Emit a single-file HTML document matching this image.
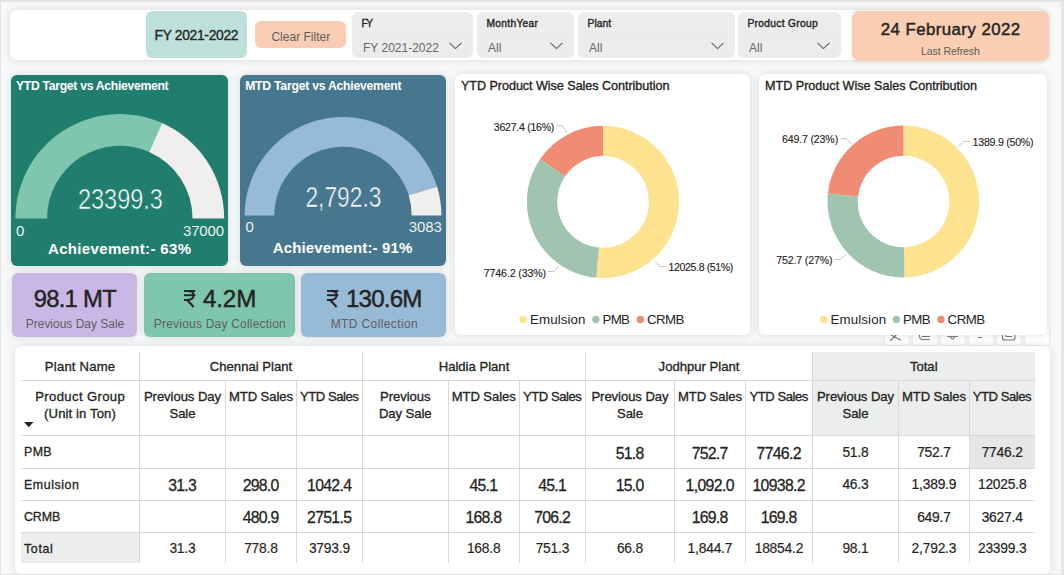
<!DOCTYPE html>
<html><head><meta charset="utf-8"><style>
html,body{margin:0;padding:0;}
body{width:1064px;height:575px;position:relative;overflow:hidden;background:#f7f8fa;font-family:"Liberation Sans", sans-serif;}
body > div, body > svg{position:absolute;}
.t{white-space:nowrap;}
</style></head><body>
<div style="left:10px;top:10px;width:1036px;height:50px;background:#ffffff;border-radius:6px;box-shadow:0 0 8px rgba(0,0,0,0.12);"></div>
<div style="left:146px;top:11px;width:101px;height:47px;background:#bde0da;border-radius:6px;"></div>
<div class="t" style="left:154.50px;top:28.62px;font-size:13.8px;line-height:13.8px;color:#252423;letter-spacing:-0.292px;-webkit-text-stroke:0.35px #252423;">FY 2021-2022</div>
<div style="left:255px;top:21px;width:91px;height:27px;background:#f9cdb3;border-radius:6px;"></div>
<div class="t" style="left:271.46px;top:30.84px;font-size:12px;line-height:12px;color:#605e5c;letter-spacing:0.000px;">Clear Filter</div>
<div style="left:352px;top:12px;width:121px;height:46px;background:#ececec;border-radius:6px;"></div>
<div style="left:360px;top:35px;width:105px;height:22px;border:1px solid #e8e8e8;box-sizing:border-box"></div>
<div class="t" style="left:361.50px;top:19.47px;font-size:10.2px;line-height:10.2px;color:#252423;letter-spacing:-1.434px;-webkit-text-stroke:0.38px #252423;">FY</div>
<div class="t" style="left:363.00px;top:41.84px;font-size:12px;line-height:12px;color:#666666;letter-spacing:0.000px;">FY 2021-2022</div>
<svg style="left:449.4px;top:41.7px" width="13" height="8"><polyline points="0.5,0.8 6.5,6.6 12.5,0.8" fill="none" stroke="#605e5c" stroke-width="1.1"/></svg>
<div style="left:477px;top:12px;width:97px;height:46px;background:#ececec;border-radius:6px;"></div>
<div style="left:485px;top:35px;width:81px;height:22px;border:1px solid #e8e8e8;box-sizing:border-box"></div>
<div class="t" style="left:486.50px;top:19.47px;font-size:10.2px;line-height:10.2px;color:#252423;letter-spacing:0.317px;-webkit-text-stroke:0.38px #252423;">MonthYear</div>
<div class="t" style="left:488.00px;top:41.84px;font-size:12px;line-height:12px;color:#666666;letter-spacing:0.000px;">All</div>
<svg style="left:550.4px;top:41.7px" width="13" height="8"><polyline points="0.5,0.8 6.5,6.6 12.5,0.8" fill="none" stroke="#605e5c" stroke-width="1.1"/></svg>
<div style="left:578px;top:12px;width:157px;height:46px;background:#ececec;border-radius:6px;"></div>
<div style="left:586px;top:35px;width:141px;height:22px;border:1px solid #e8e8e8;box-sizing:border-box"></div>
<div class="t" style="left:587.50px;top:19.47px;font-size:10.2px;line-height:10.2px;color:#252423;letter-spacing:0.113px;-webkit-text-stroke:0.38px #252423;">Plant</div>
<div class="t" style="left:589.00px;top:41.84px;font-size:12px;line-height:12px;color:#666666;letter-spacing:0.000px;">All</div>
<svg style="left:711.4px;top:41.7px" width="13" height="8"><polyline points="0.5,0.8 6.5,6.6 12.5,0.8" fill="none" stroke="#605e5c" stroke-width="1.1"/></svg>
<div style="left:738px;top:12px;width:103px;height:46px;background:#ececec;border-radius:6px;"></div>
<div style="left:746px;top:35px;width:87px;height:22px;border:1px solid #e8e8e8;box-sizing:border-box"></div>
<div class="t" style="left:747.50px;top:19.47px;font-size:10.2px;line-height:10.2px;color:#252423;letter-spacing:0.330px;-webkit-text-stroke:0.38px #252423;">Product Group</div>
<div class="t" style="left:749.00px;top:41.84px;font-size:12px;line-height:12px;color:#666666;letter-spacing:0.000px;">All</div>
<svg style="left:817.4px;top:41.7px" width="13" height="8"><polyline points="0.5,0.8 6.5,6.6 12.5,0.8" fill="none" stroke="#605e5c" stroke-width="1.1"/></svg>
<div style="left:852px;top:11px;width:197px;height:50px;background:#f9ceb2;border-radius:7px;box-shadow:0 0 4px rgba(0,0,0,0.10);"></div>
<div class="t" style="left:880.75px;top:21.68px;font-size:16.8px;line-height:16.8px;color:#252423;letter-spacing:0.458px;-webkit-text-stroke:0.45px #252423;">24 February 2022</div>
<div class="t" style="left:921.00px;top:45.83px;font-size:10.6px;line-height:10.6px;color:#605e5c;letter-spacing:-0.100px;">Last Refresh</div>
<div style="left:11px;top:75px;width:217px;height:191px;background:#217e6e;border-radius:6px;box-shadow:0 0 8px rgba(0,0,0,0.12);"></div>
<div style="left:240px;top:75px;width:206px;height:191px;background:#47778f;border-radius:6px;box-shadow:0 0 8px rgba(0,0,0,0.12);"></div>
<svg width="1064" height="575" style="left:0;top:0"><path d="M15.40,218.50 A104.4,104.4 0 0 1 161.99,123.00 L149.20,151.95 A72.75,72.75 0 0 0 47.05,218.50 Z" fill="#7fc6ae"/><path d="M161.99,123.00 A104.4,104.4 0 0 1 224.20,218.50 L192.55,218.50 A72.75,72.75 0 0 0 149.20,151.95 Z" fill="#f1efed"/></svg>
<svg width="1064" height="575" style="left:0;top:0"><path d="M244.60,215.40 A98.4,98.4 0 0 1 437.11,186.68 L408.71,195.35 A68.7,68.7 0 0 0 274.30,215.40 Z" fill="#97bad6"/><path d="M437.11,186.68 A98.4,98.4 0 0 1 441.40,215.40 L411.70,215.40 A68.7,68.7 0 0 0 408.71,195.35 Z" fill="#f1efed"/></svg>
<div class="t" style="left:16.00px;top:79.67px;font-size:12.2px;line-height:12.2px;font-weight:bold;color:#ffffff;letter-spacing:-0.300px;">YTD Target vs Achievement</div>
<div class="t" style="left:245.20px;top:79.67px;font-size:12.2px;line-height:12.2px;font-weight:bold;color:#ffffff;letter-spacing:-0.231px;">MTD Target vs Achievement</div>
<div class="t" style="left:67.58px;top:184.75px;font-size:29px;line-height:29px;color:#ffffff;transform:scaleX(0.8108);transform-origin:50% 0;-webkit-text-stroke:0.55px #217e6e;">23399.3</div>
<div class="t" style="left:16.00px;top:223.10px;font-size:15px;line-height:15px;color:#ffffff;letter-spacing:0.000px;-webkit-text-stroke:0.15px #217e6e;">0</div>
<div class="t" style="left:183.00px;top:223.10px;font-size:15px;line-height:15px;color:#ffffff;letter-spacing:-0.178px;-webkit-text-stroke:0.15px #217e6e;">37000</div>
<div class="t" style="left:48.00px;top:241.20px;font-size:15px;line-height:15px;font-weight:bold;color:#ffffff;letter-spacing:0.340px;">Achievement:- 63%</div>
<div class="t" style="left:295.12px;top:182.75px;font-size:29px;line-height:29px;color:#ffffff;transform:scaleX(0.7855);transform-origin:50% 0;-webkit-text-stroke:0.55px #47778f;">2,792.3</div>
<div class="t" style="left:245.60px;top:219.30px;font-size:15px;line-height:15px;color:#ffffff;letter-spacing:0.000px;-webkit-text-stroke:0.15px #47778f;">0</div>
<div class="t" style="left:408.80px;top:219.30px;font-size:15px;line-height:15px;color:#ffffff;letter-spacing:-0.123px;-webkit-text-stroke:0.15px #47778f;">3083</div>
<div class="t" style="left:272.75px;top:240.40px;font-size:15px;line-height:15px;font-weight:bold;color:#ffffff;letter-spacing:0.122px;">Achievement:- 91%</div>
<div style="left:12px;top:273px;width:125px;height:64px;background:#c9b8e6;border-radius:6px;box-shadow:0 0 8px rgba(0,0,0,0.12);"></div>
<div style="left:144px;top:273px;width:151px;height:64px;background:#7fc6ae;border-radius:6px;box-shadow:0 0 8px rgba(0,0,0,0.12);"></div>
<div style="left:301px;top:273px;width:145px;height:64px;background:#97bad6;border-radius:6px;box-shadow:0 0 8px rgba(0,0,0,0.12);"></div>
<div class="t" style="left:33.70px;top:287.15px;font-size:23.8px;line-height:23.8px;color:#252423;letter-spacing:-0.717px;-webkit-text-stroke:0.45px #252423;">98.1 MT</div>
<div class="t" style="left:25.75px;top:317.54px;font-size:12px;line-height:12px;color:#605e5c;letter-spacing:-0.013px;">Previous Day Sale</div>
<svg style="left:183.9px;top:290px;overflow:visible" width="11.3" height="17"><g fill="none" stroke="#252423" stroke-width="1.9"><path d="M0,0.95 H11.3"/><path d="M0,5.2 H11.3"/><path d="M0,10 H3 C7.5,10 9.6,7.8 9.6,5 C9.6,2.4 7.6,0.95 3.5,0.95"/><path d="M3.2,10 L9.6,17" stroke-width="2.1"/></g></svg>
<div class="t" style="left:202.90px;top:286.81px;font-size:24.2px;line-height:24.2px;color:#252423;letter-spacing:-0.101px;-webkit-text-stroke:0.45px #252423;">4.2M</div>
<div class="t" style="left:153.80px;top:317.54px;font-size:12px;line-height:12px;color:#605e5c;letter-spacing:0.209px;">Previous Day Collection</div>
<svg style="left:326.8px;top:290px;overflow:visible" width="11.3" height="17"><g fill="none" stroke="#252423" stroke-width="1.9"><path d="M0,0.95 H11.3"/><path d="M0,5.2 H11.3"/><path d="M0,10 H3 C7.5,10 9.6,7.8 9.6,5 C9.6,2.4 7.6,0.95 3.5,0.95"/><path d="M3.2,10 L9.6,17" stroke-width="2.1"/></g></svg>
<div class="t" style="left:346.00px;top:286.81px;font-size:24.2px;line-height:24.2px;color:#252423;letter-spacing:-0.844px;-webkit-text-stroke:0.45px #252423;">130.6M</div>
<div class="t" style="left:330.70px;top:317.54px;font-size:12px;line-height:12px;color:#605e5c;letter-spacing:0.383px;">MTD Collection</div>
<div style="left:885px;top:325px;width:24px;height:20px;background:#ffffff;border-radius:3px;box-shadow:0 0 3px rgba(0,0,0,0.10);"></div>
<div style="left:913px;top:325px;width:24px;height:20px;background:#ffffff;border-radius:3px;box-shadow:0 0 3px rgba(0,0,0,0.10);"></div>
<div style="left:941px;top:325px;width:24px;height:20px;background:#ffffff;border-radius:3px;box-shadow:0 0 3px rgba(0,0,0,0.10);"></div>
<div style="left:969px;top:325px;width:24px;height:20px;background:#ffffff;border-radius:3px;box-shadow:0 0 3px rgba(0,0,0,0.10);"></div>
<div style="left:997px;top:325px;width:24px;height:20px;background:#ffffff;border-radius:3px;box-shadow:0 0 3px rgba(0,0,0,0.10);"></div>
<div style="left:1025px;top:325px;width:24px;height:20px;background:#ffffff;border-radius:3px;box-shadow:0 0 3px rgba(0,0,0,0.10);"></div>
<svg width="1064" height="575" style="left:0;top:0"><g fill="none" stroke="#7a7a7a" stroke-width="1.1" stroke-linecap="round">
<path d="M890.5,340.5 L897.5,333.5 M891,335 L900.5,340"/>
<path d="M919.5,333 V336 Q919.5,339.5 923,339.5 H929.5 M922,336.5 H929.5"/>
<path d="M947.5,336.5 H957.5 M950.5,337 Q952.5,341 954.5,337"/>
<path d="M978.5,337.5 H981.5"/>
<path d="M1002.5,333 V338 Q1002.5,340 1004.5,340 H1013 Q1015,340 1015,338 V333 M1006,333 V336.5 H1011.5"/>
</g><g fill="#8a8a8a"><circle cx="1032" cy="334.5" r="0.8"/><circle cx="1036.3" cy="334.5" r="0.8"/><circle cx="1040.6" cy="334.5" r="0.8"/></g></svg>
<div style="left:455px;top:74px;width:295px;height:261px;background:#ffffff;border-radius:6px;box-shadow:0 0 8px rgba(0,0,0,0.12);"></div>
<div style="left:759px;top:74px;width:288px;height:261px;background:#ffffff;border-radius:6px;box-shadow:0 0 8px rgba(0,0,0,0.12);"></div>
<svg width="1064" height="575" style="left:0;top:0">
<path d="M603.00,125.80 A76.1,76.1 0 1 1 596.34,277.71 L598.99,247.52 A45.8,45.8 0 1 0 603.00,156.10 Z" fill="#fde28f"/><path d="M596.34,277.71 A76.1,76.1 0 0 1 540.05,159.13 L565.12,176.16 A45.8,45.8 0 0 0 598.99,247.52 Z" fill="#a0c4b0"/><path d="M540.05,159.13 A76.1,76.1 0 0 1 603.00,125.80 L603.00,156.10 A45.8,45.8 0 0 0 565.12,176.16 Z" fill="#f08b74"/><path d="M903.40,125.60 A75.9,75.9 0 0 1 904.47,277.39 L904.04,247.20 A45.7,45.7 0 0 0 903.40,155.80 Z" fill="#fde28f"/><path d="M904.47,277.39 A75.9,75.9 0 0 1 827.95,193.25 L857.97,196.54 A45.7,45.7 0 0 0 904.04,247.20 Z" fill="#a0c4b0"/><path d="M827.95,193.25 A75.9,75.9 0 0 1 903.40,125.60 L903.40,155.80 A45.7,45.7 0 0 0 857.97,196.54 Z" fill="#f08b74"/>
<g fill="none" stroke="#c8c6c4" stroke-width="1">
<polyline points="556.5,125.5 562,125.5 567,132.5"/>
<polyline points="548,271.5 554,271.5 558.5,266"/>
<polyline points="655,261.5 660,266.5 666,266.5"/>
<polyline points="841,138.5 846.4,138.5 851.6,143.8"/>
<polyline points="969.7,141.5 963.8,141.5 958.2,146.4"/>
<polyline points="834.4,259.5 840,259.5 846.4,254.2"/>
</g>
<g>
<circle cx="523" cy="319.5" r="3.7" fill="#fde28f"/><circle cx="595.8" cy="319.5" r="3.7" fill="#a0c4b0"/><circle cx="640.4" cy="319.5" r="3.7" fill="#f08b74"/>
</g>
</svg>
<div class="t" style="left:461.00px;top:79.83px;font-size:12.6px;line-height:12.6px;color:#252423;letter-spacing:-0.047px;-webkit-text-stroke:0.35px #252423;">YTD Product Wise Sales Contribution</div>
<div class="t" style="left:765.00px;top:79.73px;font-size:12.6px;line-height:12.6px;color:#252423;letter-spacing:-0.005px;-webkit-text-stroke:0.35px #252423;">MTD Product Wise Sales Contribution</div>
<div class="t" style="left:493.80px;top:122.23px;font-size:10.6px;line-height:10.6px;color:#252423;letter-spacing:-0.277px;-webkit-text-stroke:0.12px #252423;">3627.4 (16%)</div>
<div class="t" style="left:483.80px;top:267.93px;font-size:10.6px;line-height:10.6px;color:#252423;letter-spacing:-0.122px;-webkit-text-stroke:0.12px #252423;">7746.2 (33%)</div>
<div class="t" style="left:668.60px;top:261.83px;font-size:10.6px;line-height:10.6px;color:#252423;letter-spacing:-0.395px;-webkit-text-stroke:0.12px #252423;">12025.8 (51%)</div>
<div class="t" style="left:781.90px;top:133.63px;font-size:10.6px;line-height:10.6px;color:#252423;letter-spacing:-0.145px;-webkit-text-stroke:0.12px #252423;">649.7 (23%)</div>
<div class="t" style="left:972.60px;top:136.93px;font-size:10.6px;line-height:10.6px;color:#252423;letter-spacing:-0.240px;-webkit-text-stroke:0.12px #252423;">1389.9 (50%)</div>
<div class="t" style="left:776.30px;top:254.83px;font-size:10.6px;line-height:10.6px;color:#252423;letter-spacing:-0.155px;-webkit-text-stroke:0.12px #252423;">752.7 (27%)</div>
<div class="t" style="left:530.00px;top:313.04px;font-size:13.3px;line-height:13.3px;color:#252423;letter-spacing:0.114px;">Emulsion</div>
<div class="t" style="left:602.50px;top:313.04px;font-size:13.3px;line-height:13.3px;color:#252423;letter-spacing:-0.661px;">PMB</div>
<div class="t" style="left:647.00px;top:313.04px;font-size:13.3px;line-height:13.3px;color:#252423;letter-spacing:-0.554px;">CRMB</div>
<svg width="1064" height="575" style="left:0;top:0"><circle cx="823.6" cy="319.5" r="3.7" fill="#fde28f"/><circle cx="896.4" cy="319.5" r="3.7" fill="#a0c4b0"/><circle cx="941.0" cy="319.5" r="3.7" fill="#f08b74"/></svg>
<div class="t" style="left:830.60px;top:313.04px;font-size:13.3px;line-height:13.3px;color:#252423;letter-spacing:0.114px;">Emulsion</div>
<div class="t" style="left:903.10px;top:313.04px;font-size:13.3px;line-height:13.3px;color:#252423;letter-spacing:-0.661px;">PMB</div>
<div class="t" style="left:947.60px;top:313.04px;font-size:13.3px;line-height:13.3px;color:#252423;letter-spacing:-0.554px;">CRMB</div>
<div style="left:15px;top:346px;width:1035px;height:228px;background:#ffffff;border-radius:6px;box-shadow:0 0 8px rgba(0,0,0,0.12);"></div>
<div style="left:812.5px;top:352px;width:222.5px;height:83.5px;background:#ebeeed;border-radius:0px;"></div>
<div style="left:969.5px;top:435.5px;width:65.5px;height:33.0px;background:#e6e6e6;border-radius:0px;"></div>
<div style="left:21px;top:532.5px;width:118.5px;height:30.0px;background:#ebeeed;border-radius:0px;"></div>
<div style="left:21px;top:380.0px;width:1014px;height:1px;background:#d9d9d9"></div>
<div style="left:21px;top:435.0px;width:1014px;height:1px;background:#d9d9d9"></div>
<div style="left:21px;top:468.0px;width:1014px;height:1px;background:#d9d9d9"></div>
<div style="left:21px;top:500.0px;width:1014px;height:1px;background:#d9d9d9"></div>
<div style="left:21px;top:532.0px;width:1014px;height:1px;background:#d9d9d9"></div>
<div style="left:139.0px;top:352px;width:1px;height:210.5px;background:#d9d9d9"></div>
<div style="left:362.0px;top:352px;width:1px;height:210.5px;background:#d9d9d9"></div>
<div style="left:585.0px;top:352px;width:1px;height:210.5px;background:#d9d9d9"></div>
<div style="left:812.0px;top:352px;width:1px;height:210.5px;background:#d9d9d9"></div>
<div style="left:225.0px;top:380.5px;width:1px;height:182.0px;background:#d9d9d9"></div>
<div style="left:296.0px;top:380.5px;width:1px;height:182.0px;background:#d9d9d9"></div>
<div style="left:447.5px;top:380.5px;width:1px;height:182.0px;background:#d9d9d9"></div>
<div style="left:519.0px;top:380.5px;width:1px;height:182.0px;background:#d9d9d9"></div>
<div style="left:674.0px;top:380.5px;width:1px;height:182.0px;background:#d9d9d9"></div>
<div style="left:745.0px;top:380.5px;width:1px;height:182.0px;background:#d9d9d9"></div>
<div style="left:898.0px;top:380.5px;width:1px;height:182.0px;background:#d9d9d9"></div>
<div style="left:969.0px;top:380.5px;width:1px;height:182.0px;background:#d9d9d9"></div>
<div class="t" style="left:44.85px;top:359.91px;font-size:13.1px;line-height:13.1px;color:#252423;letter-spacing:0.206px;-webkit-text-stroke:0.32px #252423;">Plant Name</div>
<div class="t" style="left:209.85px;top:359.91px;font-size:13.1px;line-height:13.1px;color:#252423;letter-spacing:0.000px;-webkit-text-stroke:0.32px #252423;">Chennai Plant</div>
<div class="t" style="left:438.68px;top:359.91px;font-size:13.1px;line-height:13.1px;color:#252423;letter-spacing:0.000px;-webkit-text-stroke:0.32px #252423;">Haldia Plant</div>
<div class="t" style="left:658.58px;top:359.91px;font-size:13.1px;line-height:13.1px;color:#252423;letter-spacing:0.000px;-webkit-text-stroke:0.32px #252423;">Jodhpur Plant</div>
<div class="t" style="left:909.91px;top:359.91px;font-size:13.1px;line-height:13.1px;color:#252423;letter-spacing:0.000px;-webkit-text-stroke:0.32px #252423;">Total</div>
<div class="t" style="left:35.25px;top:389.91px;font-size:13.1px;line-height:13.1px;color:#252423;letter-spacing:0.359px;-webkit-text-stroke:0.32px #252423;">Product Group</div>
<div class="t" style="left:44.10px;top:406.51px;font-size:13.1px;line-height:13.1px;color:#252423;letter-spacing:0.117px;-webkit-text-stroke:0.32px #252423;">(Unit in Ton)</div>
<svg style="left:24px;top:422px" width="10" height="6"><polygon points="0,0 9.5,0 4.75,5.2" fill="#252423"/></svg>
<div class="t" style="left:143.94px;top:389.91px;font-size:13.1px;line-height:13.1px;color:#252423;letter-spacing:-0.071px;-webkit-text-stroke:0.32px #252423;">Previous Day</div>
<div class="t" style="left:169.52px;top:406.51px;font-size:13.1px;line-height:13.1px;color:#252423;letter-spacing:-0.087px;-webkit-text-stroke:0.32px #252423;">Sale</div>
<div class="t" style="left:228.93px;top:389.91px;font-size:13.1px;line-height:13.1px;color:#252423;letter-spacing:-0.081px;-webkit-text-stroke:0.32px #252423;">MTD Sales</div>
<div class="t" style="left:300.07px;top:389.91px;font-size:13.1px;line-height:13.1px;color:#252423;letter-spacing:-0.470px;-webkit-text-stroke:0.32px #252423;">YTD Sales</div>
<div class="t" style="left:380.02px;top:389.91px;font-size:13.1px;line-height:13.1px;color:#252423;letter-spacing:-0.073px;-webkit-text-stroke:0.32px #252423;">Previous</div>
<div class="t" style="left:378.94px;top:406.51px;font-size:13.1px;line-height:13.1px;color:#252423;letter-spacing:-0.076px;-webkit-text-stroke:0.32px #252423;">Day Sale</div>
<div class="t" style="left:451.68px;top:389.91px;font-size:13.1px;line-height:13.1px;color:#252423;letter-spacing:-0.081px;-webkit-text-stroke:0.32px #252423;">MTD Sales</div>
<div class="t" style="left:523.07px;top:389.91px;font-size:13.1px;line-height:13.1px;color:#252423;letter-spacing:-0.470px;-webkit-text-stroke:0.32px #252423;">YTD Sales</div>
<div class="t" style="left:591.44px;top:389.91px;font-size:13.1px;line-height:13.1px;color:#252423;letter-spacing:-0.071px;-webkit-text-stroke:0.32px #252423;">Previous Day</div>
<div class="t" style="left:617.02px;top:406.51px;font-size:13.1px;line-height:13.1px;color:#252423;letter-spacing:-0.087px;-webkit-text-stroke:0.32px #252423;">Sale</div>
<div class="t" style="left:677.93px;top:389.91px;font-size:13.1px;line-height:13.1px;color:#252423;letter-spacing:-0.081px;-webkit-text-stroke:0.32px #252423;">MTD Sales</div>
<div class="t" style="left:749.57px;top:389.91px;font-size:13.1px;line-height:13.1px;color:#252423;letter-spacing:-0.470px;-webkit-text-stroke:0.32px #252423;">YTD Sales</div>
<div class="t" style="left:816.94px;top:389.91px;font-size:13.1px;line-height:13.1px;color:#252423;letter-spacing:-0.071px;-webkit-text-stroke:0.32px #252423;">Previous Day</div>
<div class="t" style="left:842.52px;top:406.51px;font-size:13.1px;line-height:13.1px;color:#252423;letter-spacing:-0.087px;-webkit-text-stroke:0.32px #252423;">Sale</div>
<div class="t" style="left:901.93px;top:389.91px;font-size:13.1px;line-height:13.1px;color:#252423;letter-spacing:-0.081px;-webkit-text-stroke:0.32px #252423;">MTD Sales</div>
<div class="t" style="left:972.82px;top:389.91px;font-size:13.1px;line-height:13.1px;color:#252423;letter-spacing:-0.470px;-webkit-text-stroke:0.32px #252423;">YTD Sales</div>
<div class="t" style="left:24.00px;top:445.50px;font-size:12.4px;line-height:12.4px;color:#252423;letter-spacing:0.364px;-webkit-text-stroke:0.3px #252423;">PMB</div>
<div class="t" style="left:24.00px;top:478.80px;font-size:12.4px;line-height:12.4px;color:#252423;letter-spacing:0.571px;-webkit-text-stroke:0.3px #252423;">Emulsion</div>
<div class="t" style="left:24.00px;top:510.90px;font-size:12.4px;line-height:12.4px;color:#252423;letter-spacing:-0.104px;-webkit-text-stroke:0.3px #252423;">CRMB</div>
<div class="t" style="left:24.00px;top:542.50px;font-size:12.4px;line-height:12.4px;color:#252423;letter-spacing:0.652px;-webkit-text-stroke:0.3px #252423;">Total</div>
<div class="t" style="left:615.73px;top:445.93px;font-size:15.8px;line-height:15.8px;color:#252423;letter-spacing:-0.734px;-webkit-text-stroke:0.28px #252423;">51.8</div>
<div class="t" style="left:691.65px;top:445.93px;font-size:15.8px;line-height:15.8px;color:#252423;letter-spacing:-0.708px;-webkit-text-stroke:0.28px #252423;">752.7</div>
<div class="t" style="left:756.57px;top:445.93px;font-size:15.8px;line-height:15.8px;color:#252423;letter-spacing:-0.692px;-webkit-text-stroke:0.28px #252423;">7746.2</div>
<div class="t" style="left:842.40px;top:445.52px;font-size:13.8px;line-height:13.8px;color:#252423;letter-spacing:-0.218px;-webkit-text-stroke:0.22px #252423;">51.8</div>
<div class="t" style="left:917.15px;top:445.52px;font-size:13.8px;line-height:13.8px;color:#252423;letter-spacing:-0.210px;-webkit-text-stroke:0.22px #252423;">752.7</div>
<div class="t" style="left:981.66px;top:445.52px;font-size:13.8px;line-height:13.8px;color:#252423;letter-spacing:-0.206px;-webkit-text-stroke:0.22px #252423;">7746.2</div>
<div class="t" style="left:168.23px;top:478.03px;font-size:15.8px;line-height:15.8px;color:#252423;letter-spacing:-0.734px;-webkit-text-stroke:0.28px #252423;">31.3</div>
<div class="t" style="left:242.65px;top:478.03px;font-size:15.8px;line-height:15.8px;color:#252423;letter-spacing:-0.708px;-webkit-text-stroke:0.28px #252423;">298.0</div>
<div class="t" style="left:307.07px;top:478.03px;font-size:15.8px;line-height:15.8px;color:#252423;letter-spacing:-0.692px;-webkit-text-stroke:0.28px #252423;">1042.4</div>
<div class="t" style="left:469.48px;top:478.03px;font-size:15.8px;line-height:15.8px;color:#252423;letter-spacing:-0.734px;-webkit-text-stroke:0.28px #252423;">45.1</div>
<div class="t" style="left:538.23px;top:478.03px;font-size:15.8px;line-height:15.8px;color:#252423;letter-spacing:-0.734px;-webkit-text-stroke:0.28px #252423;">45.1</div>
<div class="t" style="left:615.73px;top:478.03px;font-size:15.8px;line-height:15.8px;color:#252423;letter-spacing:-0.734px;-webkit-text-stroke:0.28px #252423;">15.0</div>
<div class="t" style="left:685.53px;top:478.03px;font-size:15.8px;line-height:15.8px;color:#252423;letter-spacing:-0.629px;-webkit-text-stroke:0.28px #252423;">1,092.0</div>
<div class="t" style="left:752.49px;top:478.03px;font-size:15.8px;line-height:15.8px;color:#252423;letter-spacing:-0.682px;-webkit-text-stroke:0.28px #252423;">10938.2</div>
<div class="t" style="left:842.40px;top:478.32px;font-size:13.8px;line-height:13.8px;color:#252423;letter-spacing:-0.218px;-webkit-text-stroke:0.22px #252423;">46.3</div>
<div class="t" style="left:911.54px;top:478.32px;font-size:13.8px;line-height:13.8px;color:#252423;letter-spacing:-0.187px;-webkit-text-stroke:0.22px #252423;">1,389.9</div>
<div class="t" style="left:977.91px;top:478.32px;font-size:13.8px;line-height:13.8px;color:#252423;letter-spacing:-0.202px;-webkit-text-stroke:0.22px #252423;">12025.8</div>
<div class="t" style="left:242.65px;top:510.13px;font-size:15.8px;line-height:15.8px;color:#252423;letter-spacing:-0.708px;-webkit-text-stroke:0.28px #252423;">480.9</div>
<div class="t" style="left:307.07px;top:510.13px;font-size:15.8px;line-height:15.8px;color:#252423;letter-spacing:-0.692px;-webkit-text-stroke:0.28px #252423;">2751.5</div>
<div class="t" style="left:465.40px;top:510.13px;font-size:15.8px;line-height:15.8px;color:#252423;letter-spacing:-0.708px;-webkit-text-stroke:0.28px #252423;">168.8</div>
<div class="t" style="left:534.15px;top:510.13px;font-size:15.8px;line-height:15.8px;color:#252423;letter-spacing:-0.708px;-webkit-text-stroke:0.28px #252423;">706.2</div>
<div class="t" style="left:691.65px;top:510.13px;font-size:15.8px;line-height:15.8px;color:#252423;letter-spacing:-0.708px;-webkit-text-stroke:0.28px #252423;">169.8</div>
<div class="t" style="left:760.65px;top:510.13px;font-size:15.8px;line-height:15.8px;color:#252423;letter-spacing:-0.708px;-webkit-text-stroke:0.28px #252423;">169.8</div>
<div class="t" style="left:917.15px;top:510.82px;font-size:13.8px;line-height:13.8px;color:#252423;letter-spacing:-0.210px;-webkit-text-stroke:0.22px #252423;">649.7</div>
<div class="t" style="left:981.66px;top:510.82px;font-size:13.8px;line-height:13.8px;color:#252423;letter-spacing:-0.206px;-webkit-text-stroke:0.22px #252423;">3627.4</div>
<div class="t" style="left:169.40px;top:542.42px;font-size:13.8px;line-height:13.8px;color:#252423;letter-spacing:-0.218px;-webkit-text-stroke:0.15px #252423;">31.3</div>
<div class="t" style="left:244.15px;top:542.42px;font-size:13.8px;line-height:13.8px;color:#252423;letter-spacing:-0.210px;-webkit-text-stroke:0.15px #252423;">778.8</div>
<div class="t" style="left:308.91px;top:542.42px;font-size:13.8px;line-height:13.8px;color:#252423;letter-spacing:-0.206px;-webkit-text-stroke:0.15px #252423;">3793.9</div>
<div class="t" style="left:466.90px;top:542.42px;font-size:13.8px;line-height:13.8px;color:#252423;letter-spacing:-0.210px;-webkit-text-stroke:0.15px #252423;">168.8</div>
<div class="t" style="left:535.65px;top:542.42px;font-size:13.8px;line-height:13.8px;color:#252423;letter-spacing:-0.210px;-webkit-text-stroke:0.15px #252423;">751.3</div>
<div class="t" style="left:616.90px;top:542.42px;font-size:13.8px;line-height:13.8px;color:#252423;letter-spacing:-0.218px;-webkit-text-stroke:0.15px #252423;">66.8</div>
<div class="t" style="left:687.54px;top:542.42px;font-size:13.8px;line-height:13.8px;color:#252423;letter-spacing:-0.187px;-webkit-text-stroke:0.15px #252423;">1,844.7</div>
<div class="t" style="left:754.66px;top:542.42px;font-size:13.8px;line-height:13.8px;color:#252423;letter-spacing:-0.202px;-webkit-text-stroke:0.15px #252423;">18854.2</div>
<div class="t" style="left:842.40px;top:542.42px;font-size:13.8px;line-height:13.8px;color:#252423;letter-spacing:-0.218px;-webkit-text-stroke:0.15px #252423;">98.1</div>
<div class="t" style="left:911.54px;top:542.42px;font-size:13.8px;line-height:13.8px;color:#252423;letter-spacing:-0.187px;-webkit-text-stroke:0.15px #252423;">2,792.3</div>
<div class="t" style="left:977.91px;top:542.42px;font-size:13.8px;line-height:13.8px;color:#252423;letter-spacing:-0.202px;-webkit-text-stroke:0.15px #252423;">23399.3</div>
<div style="left:0;top:0;width:1064px;height:2px;background:#e4e4e4"></div><div style="left:0;top:0;width:1px;height:575px;background:#e4e4e4"></div><div style="left:1061px;top:0;width:3px;height:575px;background:#e6e6e6"></div><div style="left:0;top:574px;width:1064px;height:1px;background:#e4e4e4"></div>
</body></html>
